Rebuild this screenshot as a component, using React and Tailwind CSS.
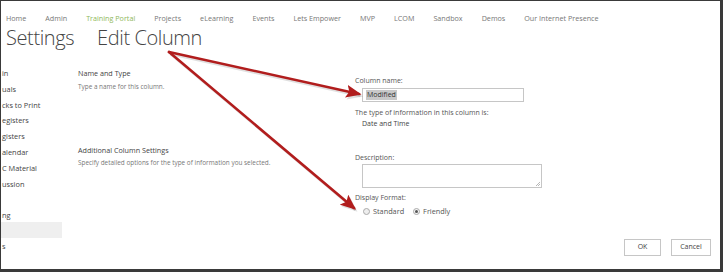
import React from 'react';

const nav = ['Home', 'Admin', 'Training Portal', 'Projects', 'eLearning', 'Events', 'Lets Empower', 'MVP', 'LCOM', 'Sandbox', 'Demos', 'Our Internet Presence'];
const side = ['in', 'uals', 'cks to Print', 'egisters', 'gisters', 'alendar', 'C Material', 'ussion', '', 'ng'];

function Arrows() {
  return (
    <svg className="absolute inset-0 pointer-events-none" width="723" height="272" viewBox="0 0 723 272">
      <defs>
        <marker id="head" markerWidth="6" markerHeight="5" refX="5" refY="2.5" orient="auto" markerUnits="strokeWidth">
          <path d="M0,0 L6,2.5 L0,5 L1.2,2.5 Z" fill="#b11d1d" />
        </marker>
        <marker id="shade" markerWidth="6" markerHeight="5" refX="5" refY="2.5" orient="auto" markerUnits="strokeWidth">
          <path d="M0,0 L6,2.5 L0,5 L1.2,2.5 Z" fill="#000" fillOpacity="0.12" />
        </marker>
      </defs>
      <g transform="translate(1.5,2)">
        <line x1="168" y1="51" x2="358" y2="93" stroke="#000" strokeOpacity="0.12" strokeWidth="2.6" markerEnd="url(#shade)" />
        <line x1="168" y1="51" x2="353" y2="207" stroke="#000" strokeOpacity="0.12" strokeWidth="2.6" markerEnd="url(#shade)" />
      </g>
      <line x1="168" y1="51" x2="358" y2="93" stroke="#b11d1d" strokeWidth="2.6" strokeLinecap="round" markerEnd="url(#head)" />
      <line x1="168" y1="51" x2="353" y2="207" stroke="#b11d1d" strokeWidth="2.6" strokeLinecap="round" markerEnd="url(#head)" />
    </svg>
  );
}

export default function App() {
  return (
    <div className="relative w-[723px] h-[272px] overflow-hidden bg-white border-t border-l border-r-[3px] border-b-[3px] border-[#3a3a3a]" style={{ fontFamily: '"Open Sans", "Noto Sans", sans-serif' }}>
      <div className="flex h-[30px] items-end pb-[7px] pl-[5px] gap-[19px] text-[7.2px] text-[#777]">
        {nav.map((n) => (
          <span key={n} className={n === 'Training Portal' ? 'text-[#8fb85c]' : ''}>{n}</span>
        ))}
      </div>
      <div className="flex gap-[23px] pl-[5px] -mt-[7px] h-[28px] items-center text-[20px] font-light tracking-[-0.4px] text-[#444] leading-none">
        <span>Settings</span>
        <span>Edit Column</span>
      </div>
      <div className="flex mt-[10px]">
        <div className="w-[61px] shrink-0 text-[7.4px] text-[#444] pt-[3px]">
          {side.map((s, i) => (
            <div key={i} className="h-[15.8px] leading-[16px] pl-[1px]">{s}</div>
          ))}
          <div className="h-[16px] bg-[#efefef] mt-[-1px]" />
          <div className="h-[16px] leading-[16px] pl-[1px]">s</div>
        </div>
        <div className="w-[293px] shrink-0 pl-[16px] pt-[5px] text-[#444]">
          <div className="text-[7.2px] leading-[12px]">Name and Type</div>
          <div className="text-[6.4px] leading-[10px] text-[#777] mt-[3px]">Type a name for this column.</div>
          <div className="text-[7.2px] leading-[12px] mt-[52px]">Additional Column Settings</div>
          <div className="text-[6.4px] leading-[10px] text-[#777] mt-[2px]">Specify detailed options for the type of information you selected.</div>
        </div>
        <div className="pt-[13px]">
          <div className="text-[7px] leading-[12px] text-[#555]">Column name:</div>
          <div className="ml-[7px] mt-[1px] w-[162px] h-[14px] border border-[#c6c6c6] flex items-center pl-[3px]">
            <span className="bg-[#c8c8c8] text-[7px] leading-[10px] text-[#333] px-[1px]">Modified</span>
          </div>
          <div className="text-[7px] leading-[11px] text-[#555] mt-[5px]">The type of information in this column is:</div>
          <div className="text-[7px] leading-[11px] text-[#444] ml-[7px]">Date and Time</div>
          <div className="text-[7px] leading-[12px] text-[#555] mt-[23px]">Description:</div>
          <div className="relative ml-[7px] w-[180px] h-[24px] border border-[#c6c6c6]">
            <svg className="absolute right-[1px] bottom-[1px]" width="5" height="5" viewBox="0 0 5 5">
              <path d="M5,1 L1,5 M5,3 L3,5" stroke="#999" strokeWidth="0.7" />
            </svg>
          </div>
          <div className="text-[7px] leading-[12px] text-[#555] mt-[4px]">Display Format:</div>
          <div className="flex items-center ml-[8px] mt-[1px] h-[12px] text-[7.3px] text-[#555] gap-[3px]">
            <span className="w-[7px] h-[7px] rounded-full border border-[#aaa] bg-[#eee]" />
            <span>Standard</span>
            <span className="ml-[6px] w-[7px] h-[7px] rounded-full border border-[#aaa] bg-[#f4f4f4] flex items-center justify-center">
              <span className="w-[3px] h-[3px] rounded-full bg-[#555]" />
            </span>
            <span>Friendly</span>
          </div>
        </div>
      </div>
      <div className="absolute right-[9px] bottom-[13px] flex gap-[10px] text-[7px] text-[#444]">
        <div className="w-[37px] h-[17px] border border-[#c6c6c6] flex items-center justify-center">OK</div>
        <div className="w-[40px] h-[17px] border border-[#c6c6c6] flex items-center justify-center">Cancel</div>
      </div>
      <Arrows />
    </div>
  );
}
